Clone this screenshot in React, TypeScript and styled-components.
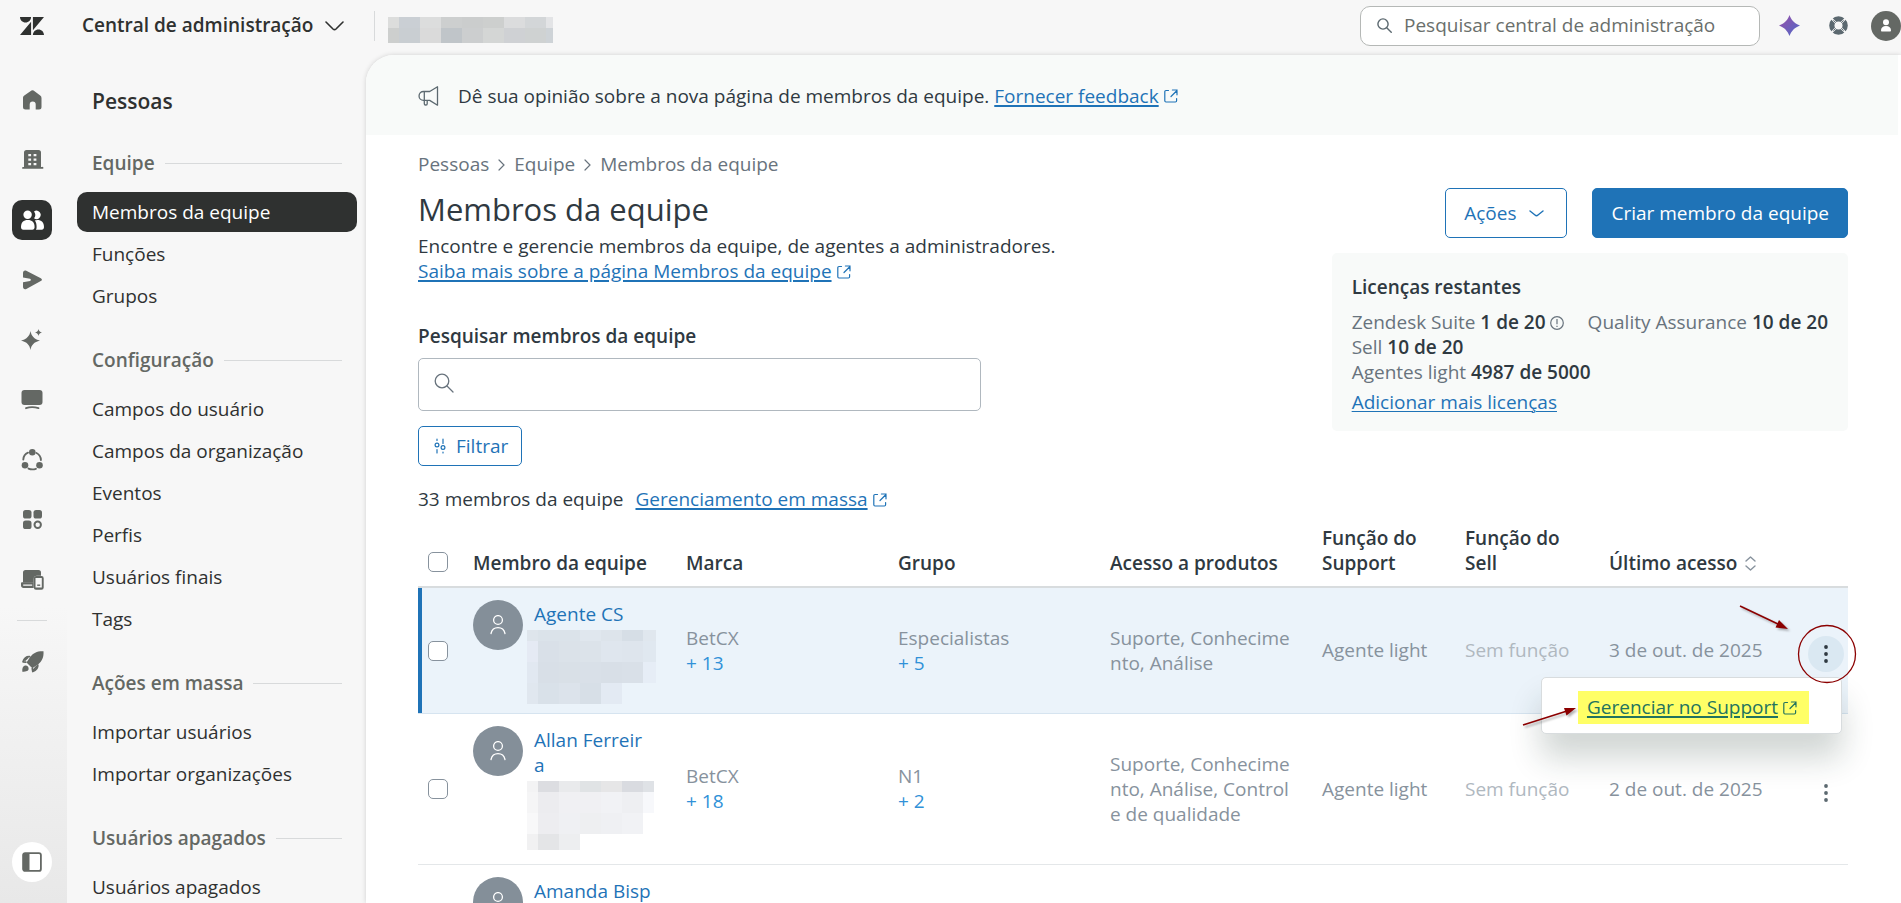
import React from "react";
import styled, { createGlobalStyle, css } from "styled-components";

const GlobalStyle = createGlobalStyle`
  *, *::before, *::after { box-sizing: border-box; }
  body {
    margin: 0;
    background: #f7f7f7;
    color: #2f3941;
    font-family: "Open Sans", "Noto Sans", sans-serif;
    font-size: 19px;
    line-height: 25px;
  }
  button, input { font: inherit; color: inherit; }
  h1, h2, h3, p, ul, dl, dd { margin: 0; padding: 0; }
  ul { list-style: none; }
  svg { display: block; flex: none; }
`;

/* ---------- shell ---------- */

const Shell = styled.div`
  display: flex;
  flex-direction: column;
  height: 100vh;
  overflow: hidden;
`;

const TopBar = styled.header`
  display: flex;
  flex: none;
  align-items: center;
  height: 55px;
  padding: 0 0 4px 20px;
`;

const ProductButton = styled.button`
  display: flex;
  align-items: center;
  gap: 12px;
  margin: 0 0 0 38px;
  padding: 0;
  border: 0;
  background: none;
  color: #2f3130;
  font-weight: 600;
  white-space: nowrap;
`;

const TopDivider = styled.span`
  width: 1px;
  height: 30px;
  margin: 0 13px 0 30px;
  background: #d8dadb;
`;

const AccountName = styled.div`
  padding-top: 8px;
`;

const TopSearch = styled.label`
  display: flex;
  align-items: center;
  gap: 12px;
  width: 400px;
  height: 40px;
  margin: 0 19px 0 auto;
  padding: 0 16px;
  border: 1px solid #b5b8b6;
  border-radius: 10px;
  background: #fff;
  color: #5c6970;
`;

const BareInput = styled.input`
  flex: 1;
  min-width: 0;
  padding: 0;
  border: 0;
  outline: 0;
  background: none;
  &::placeholder {
    color: #6a6f6c;
    opacity: 1;
  }
`;

const TopActions = styled.div`
  display: flex;
  align-items: center;
`;

const TopIconButton = styled.button`
  display: grid;
  place-items: center;
  width: 21px;
  height: 30px;
  margin-right: 28px;
  padding: 0;
  border: 0;
  background: none;
`;

const ProfileButton = styled.button`
  display: grid;
  place-items: center;
  width: 30px;
  height: 30px;
  margin-left: -6px;
  padding: 0;
  border: 0;
  border-radius: 50%;
  background: #646864;
  color: #fff;
`;

const Body = styled.div`
  display: flex;
  flex: 1;
  min-height: 0;
`;

/* ---------- icon rail ---------- */

const Rail = styled.nav`
  display: flex;
  flex: none;
  flex-direction: column;
  width: 67px;
  padding: 25px 0 21px 12px;
  background: linear-gradient(#f7f7f7 65%, #e8e8e8);
`;

const RailList = styled.ul`
  display: flex;
  flex-direction: column;
  gap: 20px;
`;

const RailButton = styled.button<{ $active?: boolean }>`
  display: grid;
  place-items: center;
  width: 40px;
  height: 40px;
  padding: 0;
  border: 0;
  border-radius: 10px;
  background: ${(p) => (p.$active ? "#2f3130" : "none")};
  color: ${(p) => (p.$active ? "#fff" : "#646864")};
`;

const RailDivider = styled.hr`
  width: 30px;
  height: 1px;
  margin: 20px 0 21px 5px;
  border: 0;
  background: #d8dadb;
`;

const CollapseButton = styled(RailButton)`
  margin-top: auto;
  border-radius: 50%;
  background: #fff;
`;

/* ---------- side navigation ---------- */

const Side = styled.nav`
  flex: none;
  width: 299px;
  padding: 33px 9px 0 10px;
  overflow: hidden;
`;

const SideTitle = styled.h2`
  padding: 0 15px;
  color: #2f3130;
  font-size: 21px;
  font-weight: 600;
  line-height: 26px;
`;

const SideSection = styled.section`
  padding-top: 32px;
  &:first-of-type {
    padding-top: 37px;
  }
`;

const SideHeading = styled.h3`
  display: flex;
  align-items: center;
  gap: 10px;
  margin-bottom: 17px;
  padding: 0 15px;
  color: #646864;
  font-size: 19px;
  font-weight: 600;
  line-height: 24px;
  white-space: nowrap;
  &::after {
    content: "";
    flex: 1;
    height: 1px;
    background: #d8dadb;
  }
`;

const SideList = styled.ul`
  display: flex;
  flex-direction: column;
  gap: 2px;
`;

const SideLink = styled.a<{ $active?: boolean }>`
  display: block;
  padding: 0 15px;
  border-radius: 10px;
  color: #2f3130;
  line-height: 40px;
  text-decoration: none;
  white-space: nowrap;
  ${(p) =>
    p.$active &&
    css`
      background: #2f3130;
      color: #fff;
    `}
`;

/* ---------- main panel ---------- */

const Panel = styled.main`
  flex: 1;
  min-width: 0;
  overflow: hidden;
  border-radius: 28px 0 0 0;
  background: #fff;
  box-shadow: 0 0 5px rgba(0, 0, 0, 0.16);
`;

const Banner = styled.div`
  display: flex;
  align-items: center;
  height: 80px;
  margin-right: 3px;
  padding: 2px 52px 0;
  background: #f8faf9;
`;

const BannerText = styled.p`
  margin-left: 19px;
`;

const Content = styled.div`
  padding: 17px 53px 0 52px;
`;

const Intro = styled.div`
  display: flex;
  justify-content: space-between;
  gap: 40px;
`;

const IntroText = styled.div`
  flex: 1;
  min-width: 0;
`;

const Crumbs = styled.nav`
  display: flex;
  align-items: center;
  gap: 9px;
  color: #68737d;
`;

const CrumbLink = styled.a`
  color: inherit;
  text-decoration: none;
`;

const PageTitle = styled.h1`
  margin: 12px 0 5px;
  font-size: 31px;
  font-weight: 400;
  line-height: 40px;
`;

const TextLink = styled.a`
  color: #1f73b7;
  text-decoration-line: underline;
  text-decoration-thickness: 2px;
  text-underline-offset: 2px;
`;

const ThinLink = styled(TextLink)`
  text-decoration-thickness: 1px;
`;

const LinkLine = styled.span`
  display: inline-flex;
  align-items: center;
  gap: 5px;
  color: #1f73b7;
  white-space: nowrap;
`;

const FieldLabel = styled.label`
  display: block;
  margin: 40px 0 9px;
  font-weight: 600;
`;

const SearchField = styled.div`
  display: flex;
  align-items: center;
  max-width: 563px;
  height: 53px;
  padding: 0 15px 4px;
  border: 1px solid #b0b8bf;
  border-radius: 5px;
  color: #68737d;
`;

const OutlineButton = styled.button<{ $large?: boolean }>`
  display: inline-flex;
  align-items: center;
  justify-content: center;
  gap: ${(p) => (p.$large ? 13 : 10)}px;
  height: ${(p) => (p.$large ? 50 : 40)}px;
  padding: 0 ${(p) => (p.$large ? 22 : 13)}px 0 ${(p) => (p.$large ? 18 : 15)}px;
  border: 1px solid #1f73b7;
  border-radius: 5px;
  background: #fff;
  color: #1f73b7;
`;

const FilterRow = styled.div`
  display: flex;
  margin-top: 15px;
`;

const CountRow = styled.div`
  display: flex;
  gap: 12px;
  margin: 21px 0 14px;
`;

const IntroSide = styled.div`
  display: flex;
  flex: none;
  flex-direction: column;
  gap: 15px;
  padding-top: 36px;
`;

const ButtonRow = styled.div`
  display: flex;
  justify-content: flex-end;
  gap: 25px;
`;

const PrimaryButton = styled.button`
  height: 50px;
  padding: 0 18px;
  border: 1px solid #1f73b7;
  border-radius: 5px;
  background: #1f73b7;
  color: #fff;
`;

const LicenseCard = styled.section`
  padding: 22px 20px 16px;
  border-radius: 5px;
  background: #f8faf9;
  white-space: nowrap;
`;

const LicenseTitle = styled.h2`
  margin-bottom: 10px;
  font-size: 19px;
  font-weight: 600;
  line-height: 25px;
`;

const LicenseGrid = styled.ul`
  display: grid;
  grid-template-columns: auto auto;
  column-gap: 24px;
  margin-bottom: 5px;
  color: #68737d;
`;

const LicenseItem = styled.li`
  display: flex;
  align-items: center;
  gap: 4px;
  strong {
    color: #2f3941;
    font-weight: 600;
  }
  &:nth-child(n + 3) {
    grid-column: 1 / -1;
  }
`;

/* ---------- table ---------- */

const Table = styled.table`
  width: 100%;
  border-spacing: 0;
  table-layout: fixed;
`;

const Col = styled.col<{ $w: number }>`
  width: ${(p) => p.$w}px;
`;

const HeadCell = styled.th`
  padding: 0 20px 10px 0;
  border-bottom: 2px solid #d8dcde;
  font-weight: 600;
  text-align: left;
  vertical-align: bottom;
`;

const SortButton = styled.button`
  display: inline-flex;
  align-items: center;
  gap: 8px;
  padding: 0;
  border: 0;
  background: none;
  font-weight: 600;
  white-space: nowrap;
`;

const CheckHeadCell = styled(HeadCell)`
  padding: 0 0 14px 10px;
`;

const Cell = styled.td`
  padding: 0 27px 0 0;
  border-bottom: 1px solid #e4e7e9;
  color: #87929d;
  vertical-align: middle;
  word-break: break-all;
`;

const CheckCell = styled(Cell)`
  padding: 0 0 0 10px;
`;

const MemberCell = styled(Cell)`
  padding: 12px 0 0;
  vertical-align: top;
`;

const PlainCell = styled(Cell)`
  padding-right: 0;
  white-space: nowrap;
`;

const MenuCell = styled(Cell)`
  padding: 7px 0 0;
`;

const Row = styled.tr<{ $active?: boolean; $tall?: boolean }>`
  height: ${(p) => (p.$tall ? 151 : 126)}px;
  ${(p) =>
    p.$active &&
    css`
      ${Cell} {
        border-bottom-color: #d6e4f0;
        background: #ebf3fa;
      }
      ${CheckCell} {
        box-shadow: inset 4px 0 #1f73b7;
      }
    `}
`;

const Check = styled.input`
  display: block;
  width: 20px;
  height: 20px;
  margin: 0;
  appearance: none;
  border: 1px solid #87929d;
  border-radius: 5px;
  background: #fff;
`;

const Member = styled.div`
  display: flex;
  gap: 11px;
`;

const Avatar = styled.span`
  display: grid;
  flex: none;
  place-items: center;
  width: 50px;
  height: 50px;
  border-radius: 50%;
  background: #848f99;
  color: #fff;
`;

const MemberText = styled.div`
  width: 118px;
  padding-top: 2px;
`;

const MemberLink = styled.a`
  display: block;
  color: #1f73b7;
  text-decoration: none;
`;

const MosaicWrap = styled.div`
  margin: 3px 0 0 -7px;
`;

const More = styled.div`
  color: #3091d8;
`;

const Muted = styled.span`
  color: #b0b8bf;
`;

const MenuAnchor = styled.div`
  position: relative;
  width: 36px;
  margin-left: 4px;
`;

const MenuButton = styled.button<{ $open?: boolean }>`
  display: grid;
  place-items: center;
  width: 36px;
  height: 36px;
  padding: 0;
  border: 0;
  border-radius: 50%;
  background: ${(p) => (p.$open ? "#dae8f2" : "none")};
  color: ${(p) => (p.$open ? "#2f3941" : "#5c6970")};
`;

const Popover = styled.div`
  position: absolute;
  z-index: 1;
  top: 41px;
  right: 2px;
  padding: 13px 32px 9px 36px;
  border: 1px solid #d8dcde;
  border-radius: 5px;
  background: #fff;
  box-shadow: 0 24px 32px rgba(23, 50, 42, 0.2);
`;

const Highlight = styled.mark`
  display: flex;
  align-items: center;
  gap: 5px;
  height: 33px;
  padding: 0 12px 0 9px;
  background: #ffff66;
  color: #22735f;
  white-space: nowrap;
`;

const MenuLink = styled(TextLink)`
  color: inherit;
`;

const Annotation = styled.svg`
  position: absolute;
  z-index: 2;
  top: -41px;
  left: -293px;
  pointer-events: none;
  filter: drop-shadow(2px 2px 1px rgba(0, 0, 0, 0.3));
`;

const Ring = styled.svg`
  position: absolute;
  z-index: 2;
  top: -12px;
  left: -11px;
  pointer-events: none;
`;

/* ---------- icons ---------- */

const Logo = () => (
  <svg width="24" height="24" viewBox="0 0 24 24" fill="#2f3130" aria-hidden="true">
    <path d="M12.914 2.904V16.29L24 2.905H12.914zM0 2.906C0 5.966 2.483 8.45 5.543 8.45s5.542-2.484 5.543-5.544H0zm11.086 4.807L0 21.096h11.086V7.713zm7.37 7.84c-3.063 0-5.542 2.48-5.542 5.543H24c0-3.06-2.48-5.543-5.543-5.543z" />
  </svg>
);

const Chevron = ({ w, h, s = 1.5 }: { w: number; h: number; s?: number }) => (
  <svg width={w} height={h} viewBox={`0 0 ${w} ${h}`} fill="none" stroke="currentColor" strokeWidth={s} strokeLinecap="round" aria-hidden="true">
    <path d={`M1 1 L${w / 2 - 1.5} ${h - 2} Q${w / 2} ${h - 0.6} ${w / 2 + 1.5} ${h - 2} L${w - 1} 1`} />
  </svg>
);

const CrumbArrow = () => (
  <svg width="7" height="12" viewBox="0 0 7 12" fill="none" stroke="currentColor" strokeWidth="1.2" strokeLinecap="round" aria-hidden="true">
    <path d="M1 1l5 5-5 5" />
  </svg>
);

const External = () => (
  <svg width="14" height="14" viewBox="0 0 14 14" fill="none" stroke="currentColor" strokeWidth="1.2" strokeLinecap="round" aria-hidden="true">
    <path d="M4.5 1.5H2a1.2 1.2 0 0 0-1.2 1.2v9.1A1.2 1.2 0 0 0 2 13h9.400a1.2 1.2 0 0 0 1.200-1.200V9.600M7 7.500l6-6M8.400 1H13v4.800" />
  </svg>
);

const Lens = ({ size }: { size: number }) => (
  <svg width={size} height={size} viewBox="0 0 20 20" fill="none" stroke="currentColor" strokeWidth={size > 16 ? 1.3 : 1.9} strokeLinecap="round" aria-hidden="true">
    <circle cx="8" cy="8" r="6.8" />
    <path d="M13 13l6 6" />
  </svg>
);

const Megaphone = () => (
  <svg width="21" height="20" viewBox="0 0 21 20" fill="none" stroke="#5c6970" strokeWidth="1.3" strokeLinejoin="round" aria-hidden="true">
    <path d="M5.500 5.500h6.200L19.500.8v18.400l-7.800-4.800H5.500a4.400 4.400 0 0 1 0-8.900zM6.300 5.500v8.900M6.300 14.400v3.400a1.200 1.200 0 0 0 1.200 1.200H8a1.200 1.200 0 0 0 1.200-1.200v-3.400" />
  </svg>
);

const Spark = () => (
  <svg width="21" height="21" viewBox="0 0 21 21" aria-hidden="true">
    <defs>
      <linearGradient id="spark" x1="0" y1="0" x2="1" y2="1">
        <stop offset="0" stopColor="#9a4fa8" />
        <stop offset="1" stopColor="#4f6ac8" />
      </linearGradient>
    </defs>
    <path fill="url(#spark)" d="M10.500 0c1.800 4.600 4 8 10.500 10.500C15 13 12.500 16 10.500 21 8.500 16 6 13 0 10.500 6.500 8 8.700 4.600 10.500 0z" />
  </svg>
);

const Lifebuoy = () => (
  <svg width="19" height="19" viewBox="0 0 20 20" aria-hidden="true">
    <circle cx="10" cy="10" r="7" fill="none" stroke="#5c6970" strokeWidth="5.600" />
    <path d="M2.500 2.500l15 15M17.500 2.500l-15 15" stroke="#f7f7f7" strokeWidth="2.200" />
    <path d="M4.600 4.600l2.600 2.600M15.400 4.600l-2.600 2.600M4.600 15.400l2.600-2.600M15.400 15.400l-2.600-2.600" stroke="#5c6970" strokeWidth="1" />
    <circle cx="10" cy="10" r="3.800" fill="#f7f7f7" />
  </svg>
);

const PersonSolid = () => (
  <svg width="12" height="13" viewBox="0 0 12 13" fill="currentColor" aria-hidden="true">
    <circle cx="6" cy="3.200" r="3" />
    <path d="M1 11.500C1 8.500 3 7 6 7s5 1.500 5 4.500c0 .5-.4 1-1 1H2c-.6 0-1-.5-1-1z" />
  </svg>
);

const PersonLine = () => (
  <svg width="16" height="20" viewBox="0 0 16 20" fill="none" stroke="currentColor" strokeWidth="1.300" strokeLinecap="round" aria-hidden="true">
    <circle cx="8" cy="5" r="4.400" />
    <path d="M1 18.500c.8-3.600 3.400-5.800 7-5.800s6.200 2.200 7 5.800" />
  </svg>
);

const InfoIcon = () => (
  <svg width="14" height="14" viewBox="0 0 14 14" fill="none" stroke="#68737d" strokeWidth="1.200" aria-hidden="true">
    <circle cx="7" cy="7" r="6.300" />
    <path d="M7 3v5.200M7 9.800v1.300" />
  </svg>
);

const FilterIcon = () => (
  <svg width="12" height="16" viewBox="0 0 12 16" fill="none" stroke="currentColor" strokeWidth="1.200" strokeLinecap="round" aria-hidden="true">
    <circle cx="3" cy="7" r="1.900" />
    <circle cx="9" cy="9.500" r="1.900" />
    <path d="M3 1v1.500M3 11.500V15M9 1v4.500M9 14v1" />
  </svg>
);

const SortIcon = () => (
  <svg width="11" height="15" viewBox="0 0 11 15" fill="none" stroke="#87929d" strokeWidth="1.400" strokeLinecap="round" strokeLinejoin="round" aria-hidden="true">
    <path d="M1 5l4.500-4L10 5M1 10l4.500 4L10 10" />
  </svg>
);

const Dots = () => (
  <svg width="4" height="18" viewBox="0 0 4 18" fill="currentColor" aria-hidden="true">
    <circle cx="2" cy="2" r="1.900" />
    <circle cx="2" cy="9" r="1.900" />
    <circle cx="2" cy="16" r="1.900" />
  </svg>
);

const RailSvg = ({ children }: { children: React.ReactNode }) => (
  <svg width="24" height="24" viewBox="0 0 24 24" fill="currentColor" aria-hidden="true">
    {children}
  </svg>
);

const railIcons: { label: string; active?: boolean; art: React.ReactNode }[] = [
  {
    label: "Início",
    art: <path d="M10.400 3.200a3.300 3.300 0 0 1 4.200 0l5.600 4.300a3 3 0 0 1 1.300 2.500v9a2.500 2.500 0 0 1-2.500 2.500h-3.300v-5a3 3 0 0 0-6 0v5H5.500A2.500 2.500 0 0 1 3 19v-9c0-1 .5-1.900 1.300-2.500z" />,
  },
  {
    label: "Conta",
    art: (
      <path
        fillRule="evenodd"
        d="M6.500 2h12A2.500 2.500 0 0 1 21 4.500V19h1a.9.9 0 0 1 .9 1.800H3A.9.9 0 0 1 3 19h1V4.500A2.500 2.500 0 0 1 6.500 2zM8.300 6v2.200h2.800V6zm5.300 0v2.200h2.800V6zM8.300 10.500v2.200h2.800v-2.200zm5.300 0v2.200h2.800v-2.200zM8.300 15v2.200h2.800V15zm5.300 0v2.200h2.800V15z"
      />
    ),
  },
  {
    label: "Pessoas",
    active: true,
    art: (
      <>
        <circle cx="7.600" cy="6.800" r="4.200" />
        <path d="M1 19c0-4.500 2.500-7 6.800-7s6.800 2.500 6.800 7c0 1.500-.8 2.700-2.300 2.700h-9C1.800 21.700 1 20.500 1 19z" />
        <path d="M14 10.300a5.600 5.600 0 0 0 0-6.900 4.200 4.200 0 1 1 0 6.900zM14.800 12.600c.8-.4 1.600-.6 2.600-.6 4 0 6.600 2.500 6.600 7 0 1.500-.8 2.700-2.300 2.700h-5.800c.6-.8.7-1.700.7-2.700 0-2.600-.5-4.700-1.800-6.400z" />
      </>
    ),
  },
  {
    label: "Canais",
    art: <path d="M3 5c0-2 1.500-3 3.300-2.200l14.500 7.500c1.500.8 1.500 2 0 2.800L6.300 20.900C4.500 21.700 3 20.700 3 18.800v-4.600l7-1.200a1.200 1.200 0 0 0 0-2.300L3 9.500z" />,
  },
  {
    label: "IA",
    art: <path d="M10.500 3c.9 5 3.500 8 9.500 9.600-6 1.600-8.600 4.400-9.500 9.400-.9-5-3.500-7.800-9.500-9.400C7 11 9.600 8 10.500 3zM18.500 1c.4 2 1.200 3 3.500 3.500-2.300.5-3.100 1.500-3.500 3.500-.4-2-1.200-3-3.500-3.500 2.300-.5 3.100-1.500 3.500-3.500z" />,
  },
  {
    label: "Espaços de trabalho",
    art: (
      <>
        <rect x="1.500" y="2" width="21" height="15" rx="3" />
        <path d="M6 20.200c4-1.500 8-1.500 12.500 0" fill="none" stroke="currentColor" strokeWidth="1.800" strokeLinecap="round" />
      </>
    ),
  },
  {
    label: "Objetos e regras",
    art: (
      <>
        <circle cx="12.300" cy="4.200" r="3.300" />
        <circle cx="5" cy="17.200" r="3.300" />
        <circle cx="19.500" cy="17.200" r="3.300" />
        <path d="M8 4.700C5 6 3.500 8.500 3.300 11.500M16.500 5c3 1.500 4.300 4 4.400 7M8.500 20.600c2.500 1 5 1 7.400.2" fill="none" stroke="currentColor" strokeWidth="1.900" strokeLinecap="round" />
      </>
    ),
  },
  {
    label: "Aplicativos",
    art: (
      <>
        <rect x="3" y="2" width="8.500" height="8.500" rx="2.600" />
        <rect x="13.500" y="2" width="8.500" height="8.500" rx="2.600" />
        <rect x="3" y="12.500" width="8.500" height="8.500" rx="2.600" />
        <circle cx="17.700" cy="16.700" r="3.200" fill="none" stroke="currentColor" strokeWidth="2" />
      </>
    ),
  },
  {
    label: "Dispositivos",
    art: (
      <>
        <path d="M5.500 2h13A2.500 2.500 0 0 1 21 4.500v3.300h-4a3.300 3.300 0 0 0-3.300 3.300v3.400H3v-10A2.500 2.500 0 0 1 5.500 2z" />
        <path fillRule="evenodd" d="M2.200 14.300h11.500V20H3.500C2 20 1 19 1 17.500v-2c0-.7.500-1.200 1.200-1.200zm1 2.200v1.300h9v-1.300z" />
        <path fillRule="evenodd" d="M16 8h5.500A2.200 2.200 0 0 1 23.700 10.200v9.300a2.200 2.200 0 0 1-2.200 2.200H16a2.200 2.200 0 0 1-2.200-2.200v-9.300A2.200 2.200 0 0 1 16 8zm-.5 2v9.500h6.300V10z" />
        <path d="M17.200 16.500h3v1.400h-3z" />
      </>
    ),
  },
];

const Rocket = () => (
  <RailSvg>
    <path d="M23.500 1.200c-6.500-.3-10 1.800-13 5.300l-4 6 5.800 5.800 6-4c3.800-3.300 5.600-7 5.200-13.100z" />
    <path d="M9.500 6.700C6 6.500 4.300 8 3 11.800l2.800.3M17.800 15c.2 3.500-1.300 5.200-5 6.500l-.5-3M5 10l3-2.600M16.500 16.500l-3.500 4" fill="none" stroke="currentColor" strokeWidth="1.700" strokeLinecap="round" strokeLinejoin="round" />
    <path d="M5 15.500c2-.5 4 1.300 3.600 3.500-.3 2-1.900 2.700-6.300 2.700-.2-3.500.5-5.600 2.700-6.200z" />
  </RailSvg>
);

const PanelIcon = () => (
  <svg width="20" height="20" viewBox="0 0 20 20" aria-hidden="true">
    <rect x="1.100" y="1.100" width="17.800" height="17.800" rx="2" fill="none" stroke="#646864" strokeWidth="1.800" />
    <path d="M1 3a2 2 0 0 1 2-2h4.500v18H3a2 2 0 0 1-2-2z" fill="#646864" />
  </svg>
);

/* ---------- redaction mosaics ---------- */

type MosaicProps = { cols: number[]; rows: number[]; tones: (string | null)[][] };

const Mosaic = ({ cols, rows, tones }: MosaicProps) => {
  const w = cols[cols.length - 1];
  const h = rows[rows.length - 1];
  return (
    <svg width={w} height={h} viewBox={`0 0 ${w} ${h}`} shapeRendering="crispEdges" aria-hidden="true">
      {tones.map((line, r) =>
        line.map((tone, c) =>
          tone ? (
            <rect key={`${r}-${c}`} x={cols[c]} y={rows[r]} width={cols[c + 1] - cols[c]} height={rows[r + 1] - rows[r]} fill={tone} />
          ) : null
        )
      )}
    </svg>
  );
};

const accountMosaic: MosaicProps = {
  cols: [0, 11, 32, 53, 74, 95, 116, 137, 158, 165],
  rows: [0, 11, 26],
  tones: [
    ["#dcdddc", "#cacfd4", "#dcdddd", "#cdcfcf", "#cbcdcd", "#cdcfce", "#dbdcdd", "#d3d6d8", "#e3e4e6"],
    ["#cdcfce", "#c9ced2", "#dadada", "#c0c5c9", "#cccecf", "#d4d6d5", "#cfd1d4", "#cfd2d2", "#ced3d7"],
  ],
};

const memberCols = [0, 11, 32, 53, 74, 95, 116, 129];

const mosaicOne: MosaicProps = {
  cols: memberCols,
  rows: [0, 11, 32, 53, 74],
  tones: [
    ["#dee5ec", "#dbe3ea", "#dbe3ea", "#e0e7ee", "#dde4eb", "#d6dee6", "#e0e7ee"],
    ["#e5eaf4", "#d9e0e8", "#dbe2e9", "#dce3ea", "#dfe6ee", "#dee5ed", "#e0e8f0"],
    ["#e1e8f1", "#d8dfe7", "#d9e0e7", "#d9e0e8", "#d8dfe7", "#d9e0e8", "#e6edf6"],
    ["#e0e7ef", "#d9e1e9", "#dce3eb", "#d7dfe7", "#e3eaf3", null, null],
  ],
};

const mosaicTwo: MosaicProps = {
  cols: [0, 11, 32, 53, 74, 95, 116, 127],
  rows: [0, 11, 32, 53, 69],
  tones: [
    ["#f3f3f4", "#dcdde1", "#e9eaec", "#e0e3e5", "#e6e6e7", "#d9dbe0", "#dfe2e6"],
    ["#f5f5f6", "#ececef", "#f0f0f3", "#f0f0f3", "#f1f2f5", "#eeeff2", "#f7f8fb"],
    ["#f8f8f9", "#ededf0", "#eff0f3", "#eeeff1", "#eff0f3", "#f1f2f5", null],
    ["#f1f1f2", "#e4e5e7", "#edeef0", null, null, null, null],
  ],
};

/* ---------- data ---------- */

const sections = [
  { title: "Equipe", links: ["Membros da equipe", "Funções", "Grupos"] },
  {
    title: "Configuração",
    links: ["Campos do usuário", "Campos da organização", "Eventos", "Perfis", "Usuários finais", "Tags"],
  },
  { title: "Ações em massa", links: ["Importar usuários", "Importar organizações"] },
  { title: "Usuários apagados", links: ["Usuários apagados"] },
];

const licenses = [
  { name: "Zendesk Suite", value: "1 de 20", info: true },
  { name: "Quality Assurance", value: "10 de 20" },
  { name: "Sell", value: "10 de 20" },
  { name: "Agentes light", value: "4987 de 5000" },
];

type MemberRow = {
  name: string;
  mosaic?: MosaicProps;
  brand?: [string, string];
  group?: [string, string];
  products?: string;
  support?: string;
  sell?: string;
  last?: string;
  open?: boolean;
};

const members: MemberRow[] = [
  {
    name: "Agente CS",
    mosaic: mosaicOne,
    brand: ["BetCX", "+ 13"],
    group: ["Especialistas", "+ 5"],
    products: "Suporte, Conhecimento, Análise",
    support: "Agente light",
    sell: "Sem função",
    last: "3 de out. de 2025",
    open: true,
  },
  {
    name: "Allan Ferreira",
    mosaic: mosaicTwo,
    brand: ["BetCX", "+ 18"],
    group: ["N1", "+ 2"],
    products: "Suporte, Conhecimento, Análise, Controle de qualidade",
    support: "Agente light",
    sell: "Sem função",
    last: "2 de out. de 2025",
  },
  { name: "Amanda Bisp" },
];

const columnWidths = [55, 213, 212, 212, 212, 143, 144, 195, 44];

/* ---------- parts ---------- */

const ExternalLink = ({ children }: { children: React.ReactNode }) => (
  <LinkLine>
    <TextLink href="#">{children}</TextLink>
    <External />
  </LinkLine>
);

const Stack = ({ lines }: { lines?: [string, string] }) =>
  lines ? (
    <>
      <div>{lines[0]}</div>
      <More>{lines[1]}</More>
    </>
  ) : null;

const RowMenu = ({ open }: { open?: boolean }) => (
  <MenuAnchor>
    <MenuButton type="button" $open={open} aria-label="Mais ações" aria-expanded={!!open}>
      <Dots />
    </MenuButton>
    {open && (
      <>
        <Popover>
          <Highlight>
            <MenuLink href="#">Gerenciar no Support</MenuLink>
            <External />
          </Highlight>
        </Popover>
        <Ring width="60" height="60" viewBox="0 0 60 60" fill="none" aria-hidden="true">
          <circle cx="30" cy="30" r="28.500" stroke="#8b0000" strokeWidth="1.300" />
        </Ring>
        <Annotation width="345" height="145" viewBox="0 0 345 145" aria-hidden="true">
          <path d="M225 11l39 18.500M8 130l44-14" stroke="#8b0000" strokeWidth="1.600" />
          <path d="M273 34l-12.500-1.500 3.500-7.500zM61 113l-9.500 7.500-2.500-7.500z" fill="#8b0000" />
        </Annotation>
      </>
    )}
  </MenuAnchor>
);

export default function App() {
  return (
    <Shell>
      <GlobalStyle />
      <TopBar>
        <Logo />
        <ProductButton type="button">
          Central de administração
          <Chevron w={19} h={10} s={1.600} />
        </ProductButton>
        <TopDivider />
        <AccountName>
          <Mosaic {...accountMosaic} />
        </AccountName>
        <TopSearch>
          <Lens size={15} />
          <BareInput type="search" aria-label="Pesquisar central de administração" placeholder="Pesquisar central de administração" />
        </TopSearch>
        <TopActions>
          <TopIconButton type="button" aria-label="Copiloto">
            <Spark />
          </TopIconButton>
          <TopIconButton type="button" aria-label="Ajuda">
            <Lifebuoy />
          </TopIconButton>
          <ProfileButton type="button" aria-label="Perfil">
            <PersonSolid />
          </ProfileButton>
        </TopActions>
      </TopBar>
      <Body>
        <Rail aria-label="Principal">
          <RailList>
            {railIcons.map((icon) => (
              <li key={icon.label}>
                <RailButton type="button" $active={icon.active} aria-label={icon.label}>
                  <RailSvg>{icon.art}</RailSvg>
                </RailButton>
              </li>
            ))}
          </RailList>
          <RailDivider />
          <RailButton type="button" aria-label="Novidades">
            <Rocket />
          </RailButton>
          <CollapseButton type="button" aria-label="Recolher navegação">
            <PanelIcon />
          </CollapseButton>
        </Rail>
        <Side aria-label="Pessoas">
          <SideTitle>Pessoas</SideTitle>
          {sections.map((section) => (
            <SideSection key={section.title}>
              <SideHeading>{section.title}</SideHeading>
              <SideList>
                {section.links.map((link) => (
                  <li key={link}>
                    <SideLink href="#" $active={link === "Membros da equipe"}>
                      {link}
                    </SideLink>
                  </li>
                ))}
              </SideList>
            </SideSection>
          ))}
        </Side>
        <Panel>
          <Banner>
            <Megaphone />
            <BannerText>
              Dê sua opinião sobre a nova página de membros da equipe. <ExternalLink>Fornecer feedback</ExternalLink>
            </BannerText>
          </Banner>
          <Content>
            <Intro>
              <IntroText>
                <Crumbs aria-label="Trilha">
                  <CrumbLink href="#">Pessoas</CrumbLink>
                  <CrumbArrow />
                  <CrumbLink href="#">Equipe</CrumbLink>
                  <CrumbArrow />
                  <span>Membros da equipe</span>
                </Crumbs>
                <PageTitle>Membros da equipe</PageTitle>
                <p>Encontre e gerencie membros da equipe, de agentes a administradores.</p>
                <p>
                  <ExternalLink>Saiba mais sobre a página Membros da equipe</ExternalLink>
                </p>
                <FieldLabel htmlFor="member-search">Pesquisar membros da equipe</FieldLabel>
                <SearchField>
                  <Lens size={20} />
                  <BareInput id="member-search" type="text" />
                </SearchField>
                <FilterRow>
                  <OutlineButton type="button">
                    <FilterIcon />
                    Filtrar
                  </OutlineButton>
                </FilterRow>
              </IntroText>
              <IntroSide>
                <ButtonRow>
                  <OutlineButton type="button" $large>
                    Ações
                    <Chevron w={15} h={7} s={1.400} />
                  </OutlineButton>
                  <PrimaryButton type="button">Criar membro da equipe</PrimaryButton>
                </ButtonRow>
                <LicenseCard>
                  <LicenseTitle>Licenças restantes</LicenseTitle>
                  <LicenseGrid>
                    {licenses.map((item) => (
                      <LicenseItem key={item.name}>
                        <span>
                          {item.name} <strong>{item.value}</strong>
                        </span>
                        {item.info && <InfoIcon />}
                      </LicenseItem>
                    ))}
                  </LicenseGrid>
                  <ThinLink href="#">Adicionar mais licenças</ThinLink>
                </LicenseCard>
              </IntroSide>
            </Intro>
            <CountRow>
              <span>33 membros da equipe</span>
              <ExternalLink>Gerenciamento em massa</ExternalLink>
            </CountRow>
            <Table>
              <colgroup>
                {columnWidths.map((w, i) => (
                  <Col key={i} $w={w} />
                ))}
              </colgroup>
              <thead>
                <tr>
                  <CheckHeadCell>
                    <Check type="checkbox" aria-label="Selecionar todos" />
                  </CheckHeadCell>
                  <HeadCell>Membro da equipe</HeadCell>
                  <HeadCell>Marca</HeadCell>
                  <HeadCell>Grupo</HeadCell>
                  <HeadCell>Acesso a produtos</HeadCell>
                  <HeadCell>Função do Support</HeadCell>
                  <HeadCell>Função do Sell</HeadCell>
                  <HeadCell>
                    <SortButton type="button">
                      Último acesso
                      <SortIcon />
                    </SortButton>
                  </HeadCell>
                  <HeadCell />
                </tr>
              </thead>
              <tbody>
                {members.map((m) => (
                  <Row key={m.name} $active={m.open} $tall={!m.open}>
                    <CheckCell>
                      <Check type="checkbox" aria-label={m.name} />
                    </CheckCell>
                    <MemberCell>
                      <Member>
                        <Avatar>
                          <PersonLine />
                        </Avatar>
                        <MemberText>
                          <MemberLink href="#">{m.name}</MemberLink>
                          {m.mosaic && (
                            <MosaicWrap>
                              <Mosaic {...m.mosaic} />
                            </MosaicWrap>
                          )}
                        </MemberText>
                      </Member>
                    </MemberCell>
                    <Cell>
                      <Stack lines={m.brand} />
                    </Cell>
                    <Cell>
                      <Stack lines={m.group} />
                    </Cell>
                    <Cell>{m.products}</Cell>
                    <PlainCell>{m.support}</PlainCell>
                    <PlainCell>
                      <Muted>{m.sell}</Muted>
                    </PlainCell>
                    <PlainCell>{m.last}</PlainCell>
                    <MenuCell>
                      <RowMenu open={m.open} />
                    </MenuCell>
                  </Row>
                ))}
              </tbody>
            </Table>
          </Content>
        </Panel>
      </Body>
    </Shell>
  );
}
